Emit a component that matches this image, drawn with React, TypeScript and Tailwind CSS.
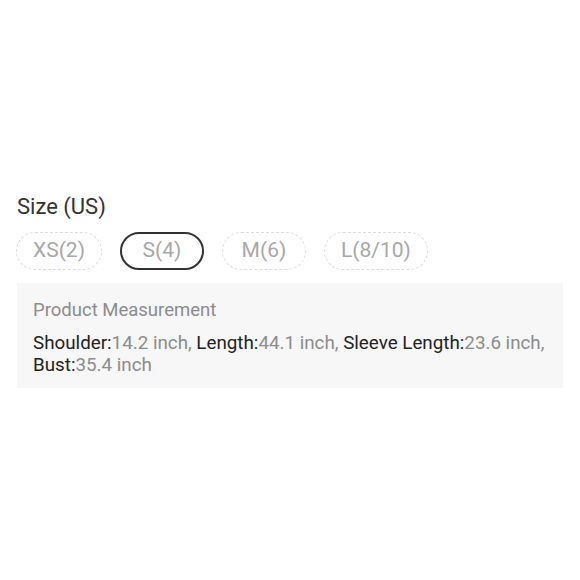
import React from 'react';

const sizes = [
  { label: 'XS(2)', selected: false },
  { label: 'S(4)', selected: true },
  { label: 'M(6)', selected: false },
  { label: 'L(8/10)', selected: false },
];

const measurements = [
  { name: 'Shoulder', value: '14.2 inch' },
  { name: 'Length', value: '44.1 inch' },
  { name: 'Sleeve Length', value: '23.6 inch' },
  { name: 'Bust', value: '35.4 inch' },
];

export default function App() {
  return (
    <div className="w-[580px] h-[580px] bg-white font-['Roboto',sans-serif] pt-[193px] px-[16px]">
      <div className="text-[22px] leading-[28px] text-[#333] pl-[1px]">Size (US)</div>
      <div className="flex gap-[18px] mt-[11px]">
        {sizes.map((s) => (
          <div
            key={s.label}
            className={`h-[38px] min-w-[84px] px-[16px] rounded-full flex items-center justify-center text-[21px] text-[#a8a8a8] ${
              s.selected ? 'border-2 border-[#333]' : 'border-[1.5px] border-dashed border-[#dcdcdc]'
            }`}
          >
            {s.label}
          </div>
        ))}
      </div>
      <div className="mt-[13px] ml-[1px] w-[546px] h-[105px] bg-[#f7f7f7] pl-[16px] pr-[10px] pt-[16px]">
        <div className="text-[18.5px] leading-[22px] text-[#8c8c8c]">Product Measurement</div>
        <div className="mt-[11px] text-[18.8px] leading-[22px]">
          {measurements.map((m, i) => (
            <span key={m.name}>
              <span className="text-[#222]">{m.name}:</span>
              <span className="text-[#8c8c8c]">
                {m.value}
                {i < measurements.length - 1 ? ', ' : ''}
              </span>
            </span>
          ))}
        </div>
      </div>
    </div>
  );
}
